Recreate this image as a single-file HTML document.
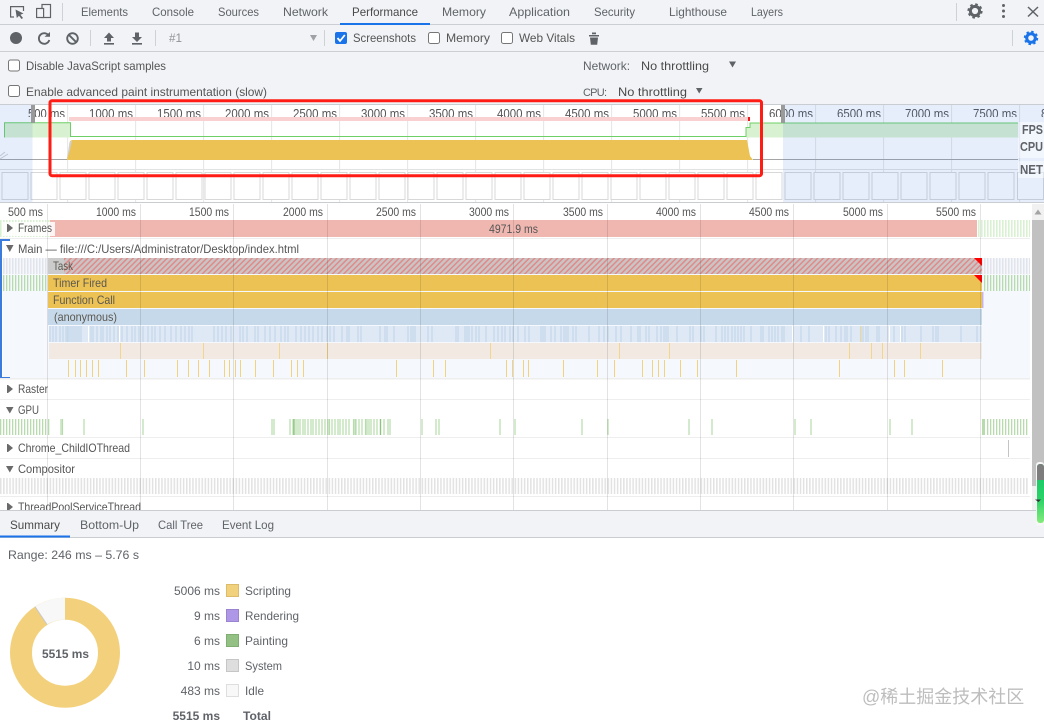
<!DOCTYPE html>
<html>
<head>
<meta charset="utf-8">
<title>Performance</title>
<style>
html,body{margin:0;padding:0;background:#fff;width:1044px;height:728px;overflow:hidden}
svg{display:block;position:absolute;left:0;top:0}
text{font-family:"Liberation Sans","Noto Sans CJK SC",sans-serif;font-size:12px;fill:#5f6368}
.d{fill:#4a4a4a}
.m{fill:#555}
.b{font-weight:bold}
.f{fill:#5c5850}
.o{font-size:12.5px;fill:#555}
.l{font-size:13px;font-weight:bold}
</style>
</head>
<body>
<svg width="1044" height="728" viewBox="0 0 1044 728" xmlns="http://www.w3.org/2000/svg">
<defs>
<pattern id="gp" width="3" height="20" patternUnits="userSpaceOnUse"><rect width="1.3" height="20" fill="#b7dbac"/></pattern>
<pattern id="gr" width="3" height="20" patternUnits="userSpaceOnUse"><rect width="1.6" height="20" fill="#d9f1d2"/></pattern>
<pattern id="gy" width="3" height="20" patternUnits="userSpaceOnUse"><rect width="1.5" height="20" fill="#e2e4ec"/></pattern>
<pattern id="cp" width="3.1" height="20" patternUnits="userSpaceOnUse"><rect width="1.5" height="20" fill="#e2e2e2"/></pattern>
<pattern id="ht" width="4" height="4" patternUnits="userSpaceOnUse" patternTransform="rotate(45)"><rect width="4" height="4" fill="#cbc4c4"/><rect width="1.5" height="4" fill="#e08a8a"/></pattern>
<pattern id="ss" x="1.5" y="172" width="29" height="30" patternUnits="userSpaceOnUse"><rect x=".5" y=".5" width="26" height="27" fill="#fff" stroke="#d8d8d8"/></pattern>
<linearGradient id="gg" x1="0" y1="0" x2="0" y2="1"><stop offset="0" stop-color="#13c468"/><stop offset=".6" stop-color="#2bd268"/><stop offset="1" stop-color="#85ea7c"/></linearGradient>
<clipPath id="ov"><rect x="0" y="104" width="1044" height="13"/></clipPath>
<clipPath id="main"><rect x="0" y="204" width="1044" height="306"/></clipPath>
</defs>

<!-- toolbars -->
<rect width="1044" height="104" fill="#f1f3f6"/>
<path d="M0 24.5H1044M0 51.5H1044" stroke="#cbced3"/>
<rect x="340" y="23" width="90" height="2" fill="#1a73e8"/>

<!-- tab icons -->
<g fill="none" stroke="#5f6368" stroke-width="1.2">
<path d="M14 17H10.6V6.6H23.5V11"/>
<rect x="42" y="4.5" width="8.5" height="13"/>
<rect x="36.6" y="8.5" width="7" height="9" fill="#f1f3f6"/>
</g>
<path d="M15.5 9.5L23.5 13.5L20.4 14.8L23 18L21.5 19L19 15.8L16.8 18Z" fill="#5f6368"/>
<path d="M62.5 3V21M956.5 3V21M90.5 30V46M155.5 30V46M324.5 30V46M1012.5 30V46" stroke="#ced1d5"/>

<!-- tabs -->
<text x="81" y="16" textLength="47" lengthAdjust="spacingAndGlyphs">Elements</text>
<text x="152" y="16" textLength="42" lengthAdjust="spacingAndGlyphs">Console</text>
<text x="218" y="16" textLength="41" lengthAdjust="spacingAndGlyphs">Sources</text>
<text x="283" y="16" textLength="45" lengthAdjust="spacingAndGlyphs">Network</text>
<text x="352" y="16" textLength="66" lengthAdjust="spacingAndGlyphs" class="d">Performance</text>
<text x="442" y="16" textLength="44" lengthAdjust="spacingAndGlyphs">Memory</text>
<text x="509" y="16" textLength="61" lengthAdjust="spacingAndGlyphs">Application</text>
<text x="594" y="16" textLength="41" lengthAdjust="spacingAndGlyphs">Security</text>
<text x="669" y="16" textLength="58" lengthAdjust="spacingAndGlyphs">Lighthouse</text>
<text x="751" y="16" textLength="32" lengthAdjust="spacingAndGlyphs">Layers</text>

<!-- top right icons -->
<g transform="translate(975 11)" fill="none" stroke="#5f6368">
<circle r="4.6" stroke-width="3"/>
<circle r="6.6" stroke-width="2" stroke-dasharray="2.6 2.58"/>
</g>
<g fill="#5f6368"><circle cx="1003.5" cy="5.5" r="1.5"/><circle cx="1003.5" cy="11" r="1.5"/><circle cx="1003.5" cy="16.5" r="1.5"/></g>
<path d="M1028 7L1038 16.5M1038 7L1028 16.5" stroke="#5f6368" stroke-width="1.5"/>

<!-- toolbar 2 icons -->
<circle cx="16" cy="38" r="6" fill="#5f6368"/>
<path d="M49 36.2A5.3 5.3 0 1 0 49.3 40" fill="none" stroke="#5f6368" stroke-width="1.9"/>
<path d="M44.5 36.8H50V32Z" fill="#5f6368"/>
<circle cx="72.5" cy="38.5" r="5.3" fill="none" stroke="#5f6368" stroke-width="1.9"/>
<path d="M68.8 34.8L76.2 42.2" stroke="#5f6368" stroke-width="1.9"/>
<path d="M109 32.5L114 38H111V41.5H107V38H104ZM104 43H114V44.6H104Z" fill="#5f6368"/>
<path d="M135 32.5H139V37H142L137 42L132 37H135ZM132 43H142V44.6H132Z" fill="#5f6368"/>
<text x="169" y="42" textLength="13" lengthAdjust="spacingAndGlyphs" style="fill:#8f9296">#1</text>
<path d="M310 35H317L313.5 41Z" fill="#9ea1a5"/>

<!-- checkboxes -->
<rect x="335" y="32" width="12" height="12" rx="2" fill="#1a73e8"/>
<path d="M337.5 38L340 41L344.8 35" fill="none" stroke="#fff" stroke-width="1.8"/>
<text x="353" y="42" textLength="63" lengthAdjust="spacingAndGlyphs" class="m">Screenshots</text>
<g fill="#fff" stroke="#767676">
<rect x="428.5" y="32.5" width="11" height="11" rx="2"/>
<rect x="501.5" y="32.5" width="11" height="11" rx="2"/>
<rect x="8.5" y="60" width="11" height="11" rx="2"/>
<rect x="8.5" y="85.5" width="11" height="11" rx="2"/>
</g>
<text x="446" y="42" textLength="44" lengthAdjust="spacingAndGlyphs" class="m">Memory</text>
<text x="519" y="42" textLength="56" lengthAdjust="spacingAndGlyphs" class="m">Web Vitals</text>
<path d="M589 35H599V36.5H589ZM592 32.5H596V34.2H592ZM590 37.5H598L597.2 44.8H590.8Z" fill="#5f6368"/>
<g transform="translate(1031 38)" fill="none" stroke="#1a73e8">
<circle r="4.3" stroke-width="3"/>
<circle r="6.2" stroke-width="2" stroke-dasharray="2.45 2.42"/>
</g>

<text x="26" y="70" textLength="140" lengthAdjust="spacingAndGlyphs" class="m">Disable JavaScript samples</text>
<text x="26" y="96" textLength="241" lengthAdjust="spacingAndGlyphs" class="m">Enable advanced paint instrumentation (slow)</text>
<text x="583" y="70" textLength="47" lengthAdjust="spacingAndGlyphs">Network:</text>
<text x="641" y="70" textLength="68" lengthAdjust="spacingAndGlyphs" class="d">No throttling</text>
<path d="M729 61.5H736L732.5 67.5Z" fill="#5f6368"/>
<text x="583" y="96" textLength="24" lengthAdjust="spacing" style="font-size:11px">CPU:</text>
<text x="618" y="96" textLength="69" lengthAdjust="spacingAndGlyphs" class="d">No throttling</text>
<path d="M696 88H702.5L699.2 93.5Z" fill="#5f6368"/>

<!-- overview -->
<rect x="0" y="104" width="1044" height="98" fill="#fff"/>
<path d="M0 104.5H1044M0 202.5H1044" stroke="#c9ccd0"/>
<path d="M67.6 105V202M135.6 105V202M203.6 105V202M271.6 105V202M339.6 105V202M407.6 105V202M475.6 105V202M543.6 105V202M611.6 105V202M679.6 105V202M747.6 105V202M815.6 105V202M883.6 105V202M951.6 105V202M1019.6 105V202" stroke="#e6e6e6"/>
<g clip-path="url(#ov)">
<text x="28" y="118" textLength="37" lengthAdjust="spacingAndGlyphs" class="o">500 ms</text>
<text x="89" y="118" textLength="44" lengthAdjust="spacingAndGlyphs" class="o">1000 ms</text>
<text x="157" y="118" textLength="44" lengthAdjust="spacingAndGlyphs" class="o">1500 ms</text>
<text x="225" y="118" textLength="44" lengthAdjust="spacingAndGlyphs" class="o">2000 ms</text>
<text x="293" y="118" textLength="44" lengthAdjust="spacingAndGlyphs" class="o">2500 ms</text>
<text x="361" y="118" textLength="44" lengthAdjust="spacingAndGlyphs" class="o">3000 ms</text>
<text x="429" y="118" textLength="44" lengthAdjust="spacingAndGlyphs" class="o">3500 ms</text>
<text x="497" y="118" textLength="44" lengthAdjust="spacingAndGlyphs" class="o">4000 ms</text>
<text x="565" y="118" textLength="44" lengthAdjust="spacingAndGlyphs" class="o">4500 ms</text>
<text x="633" y="118" textLength="44" lengthAdjust="spacingAndGlyphs" class="o">5000 ms</text>
<text x="701" y="118" textLength="44" lengthAdjust="spacingAndGlyphs" class="o">5500 ms</text>
<text x="769" y="118" textLength="44" lengthAdjust="spacingAndGlyphs" class="o">6000 ms</text>
<text x="837" y="118" textLength="44" lengthAdjust="spacingAndGlyphs" class="o">6500 ms</text>
<text x="905" y="118" textLength="44" lengthAdjust="spacingAndGlyphs" class="o">7000 ms</text>
<text x="973" y="118" textLength="44" lengthAdjust="spacingAndGlyphs" class="o">7500 ms</text>
<text x="1041" y="118" textLength="44" lengthAdjust="spacingAndGlyphs" class="o">8000 ms</text>
</g>
<!-- FPS -->
<rect x="69" y="117" width="679" height="4" fill="#f9d1d1"/>
<rect x="748" y="117" width="2" height="4" fill="#f01818"/>
<path d="M4.5 137.5V122.7H70.5V137.5Z" fill="#d8f1d0"/>
<path d="M746 137.5V127.5H750V123H1018V137.5Z" fill="#d8f1d0"/>
<path d="M4.5 137.5V122.7H70.5V136.5H746V127.5H750V123H1018" fill="none" stroke="#6dd066"/>
<!-- CPU -->
<path d="M67 160L70 141L72 140H747L750 156L753 160Z" fill="#ecc254"/>
<path d="M67 159L69.5 142L72 140.5L70 150Z" fill="#cfcfcf"/>
<path d="M0 159.5H67M753 159.5H1018" stroke="#a5a5a5"/>
<path d="M0 156L5 152M0 159L8 154" stroke="#d0d0d0"/>
<path d="M0 169.5H1018" stroke="#e2e2e2"/>
<!-- screenshots -->
<rect x="1.5" y="172" width="1014" height="28" fill="url(#ss)"/>
<rect x="1017.5" y="172.5" width="26" height="27" fill="#fff" stroke="#d8d8d8"/>
<!-- overlay -->
<rect x="0" y="105" width="32.5" height="97" fill="#4278dc" fill-opacity=".125"/>
<rect x="783" y="105" width="261" height="97" fill="#4278dc" fill-opacity=".125"/>
<rect x="31" y="105" width="4" height="18" fill="#9a9a9a"/>
<rect x="781" y="105" width="4" height="18" fill="#9a9a9a"/>
<!-- labels -->
<rect x="1019" y="122" width="25" height="16" fill="#fff" fill-opacity=".45"/>
<rect x="1018" y="138" width="26" height="20" fill="#fff" fill-opacity=".45"/>
<rect x="1018" y="161" width="26" height="17" fill="#fff" fill-opacity=".45"/>
<text x="1022" y="134" textLength="21" lengthAdjust="spacingAndGlyphs" class="l">FPS</text>
<text x="1020" y="151" textLength="23" lengthAdjust="spacingAndGlyphs" class="l">CPU</text>
<text x="1020" y="174" textLength="23" lengthAdjust="spacingAndGlyphs" class="l">NET</text>

<!-- main area -->
<g clip-path="url(#main)">
<rect x="0" y="203" width="1044" height="307" fill="#fff"/>
<!-- frames -->
<rect x="0" y="220" width="50" height="17" fill="url(#gr)"/>
<rect x="50" y="220" width="927" height="17" fill="#f0b7b1"/>
<rect x="978" y="220" width="52" height="17" fill="url(#gr)"/>
<rect x="3" y="222" width="52" height="14" fill="#fff" fill-opacity=".85"/>
<rect x="0" y="238" width="1030" height="1" fill="#eeeeee"/>
<path d="M7 224H8L13 228L8 232H7Z" fill="#6a6a6a"/>
<text x="18" y="232" textLength="34" lengthAdjust="spacingAndGlyphs" class="m">Frames</text>
<text x="489" y="233" textLength="49" lengthAdjust="spacingAndGlyphs" class="m">4971.9 ms</text>

<!-- Main group -->
<rect x="3" y="258" width="1027" height="120" fill="#f5f8fd"/>
<path d="M10 240H1V378H10" fill="none" stroke="#3a7bdc" stroke-width="2"/>
<path d="M6 245H13.5L9.8 252Z" fill="#6a6a6a"/>
<text x="18" y="253" textLength="281" lengthAdjust="spacingAndGlyphs" class="m">Main — file:///C:/Users/Administrator/Desktop/index.html</text>

<rect x="3" y="258" width="45" height="16" fill="url(#gy)"/>
<rect x="982" y="258" width="48" height="16" fill="url(#gy)"/>
<rect x="3" y="275" width="45" height="16" fill="url(#gp)"/>
<rect x="983" y="275" width="47" height="16" fill="url(#gp)"/>

<rect x="48" y="258" width="934" height="16" fill="url(#ht)"/>
<rect x="48" y="258" width="16" height="16" fill="#cbcbcb"/>
<rect x="48" y="275" width="934" height="16" fill="#ecc254"/>
<rect x="48" y="292" width="934" height="16" fill="#ecc254"/>
<rect x="982" y="292" width="1.5" height="16" fill="#c7b4e6"/>
<rect x="48" y="309" width="934" height="16" fill="#c5d9ea"/>
<path d="M974 258H982V266Z" fill="#f00"/>
<path d="M974 275H982V283Z" fill="#f00"/>
<text x="53" y="270" textLength="20" lengthAdjust="spacingAndGlyphs" class="f">Task</text>
<text x="53" y="287" textLength="54" lengthAdjust="spacingAndGlyphs" class="f">Timer Fired</text>
<text x="53" y="304" textLength="62" lengthAdjust="spacingAndGlyphs" class="f">Function Call</text>
<text x="54" y="321" textLength="63" lengthAdjust="spacingAndGlyphs" class="f">(anonymous)</text>

<!-- blue stripes row -->
<rect x="49" y="326" width="933" height="16" fill="#dfe9f5"/>
<path stroke="#c5d9ea" stroke-width="1.3" d="M50 326v16M53 326v16M56 326v16M60 326v16M63 326v16M66 326v16M67.500 326v16M69 326v16M71 326v16M73 326v16M75 326v16M77 326v16M79 326v16M81 326v16M91 326v16M93 326v16M97 326v16M101 326v16M103 326v16M107 326v16M110 326v16M114 326v16M118 326v16M122 326v16M127 326v16M132 326v16M135 326v16M139 326v16M143 326v16M148 326v16M152 326v16M155 326v16M160 326v16M165 326v16M171 326v16M176 326v16M181 326v16M185 326v16M189 326v16M192 326v16M214 326v16M218 326v16M222 326v16M226 326v16M231 326v16M240 326v16M243 326v16M247 326v16M255 326v16M258 326v16M265 326v16M270 326v16M275 326v16M281 326v16M285 326v16M288 326v16M296 326v16M301 326v16M305 326v16M309 326v16M313 326v16M318 326v16M322 326v16M327 326v16M330 326v16M334 326v16M342 326v16M347 326v16M349 326v16M358 326v16M361 326v16M380 326v16M385 326v16M387 326v16M394 326v16M408 326v16M411 326v16M413 326v16M415 326v16M428 326v16M432 326v16M456 326v16M458 326v16M465 326v16M467 326v16M469 326v16M472 326v16M476 326v16M479 326v16M486 326v16M494 326v16M498 326v16M502 326v16M505 326v16M510 326v16M513 326v16M518 326v16M525 326v16M529 326v16M541 326v16M543 326v16M545 326v16M551 326v16M555 326v16M561 326v16M564 326v16M566 326v16M568 326v16M573 326v16M576 326v16M589 326v16M599 326v16M604 326v16M608 326v16M616 326v16M621 326v16M631 326v16M638 326v16M640 326v16M646 326v16M649 326v16M657 326v16M661 326v16M664 326v16M666 326v16M668 326v16M677 326v16M690 326v16M693 326v16M701 326v16M704 326v16M716 326v16M722 326v16M725 326v16M728 326v16M732 326v16M735 326v16M738 326v16M741 326v16M744 326v16M751 326v16M761 326v16M763 326v16M769 326v16M772 326v16M775 326v16M778 326v16M782 326v16M784 326v16M801 326v16M809 326v16M826 326v16M829 326v16M836 326v16M841 326v16M845 326v16M847 326v16M851 326v16M861 326v16M863 326v16M866 326v16M868 326v16M877 326v16M879 326v16M894 326v16M902 326v16M905 326v16M921 326v16M933 326v16M936 326v16M938 326v16M961 326v16M977 326v16"/>
<path stroke="#fff" stroke-width="1" d="M88.500 326v16M119.500 326v16M792.500 326v16M823.500 326v16M889.500 326v16M900.500 326v16"/>
<!-- beige row -->
<rect x="49" y="343" width="933" height="16" fill="#f2e9e3"/>
<path stroke="#f1d78e" stroke-width="1" d="M120.500 343v16M203.500 343v16M279.500 343v16M327.500 343v16M490.500 343v16M619.500 343v16M669.500 343v16M849.500 343v16M871.500 343v16M882.500 343v16M920.500 343v16"/>
<path stroke="#f1d78e" stroke-width="1" d="M860.500 326v16"/>
<!-- yellow ticks -->
<path stroke="#f2d27e" stroke-width="1" d="M68.500 360v17M75.500 360v17M80.500 360v17M86.500 360v17M92.500 360v17M98.500 360v17M126.500 360v17M144.500 360v17M177.500 360v17M188.500 360v17M198.500 360v17M209.500 360v17M224.500 360v17M229.500 360v17M235.500 360v17M240.500 360v17M255.500 360v17M273.500 360v17M291.500 360v17M297.500 360v17M303.500 360v17M396.500 360v17M433.500 360v17M445.500 360v17M506.500 360v17M512.500 360v17M523.500 360v17M528.500 360v17M563.500 360v17M597.500 360v17M614.500 360v17M642.500 360v17M652.500 360v17M658.500 360v17M664.500 360v17M680.500 360v17M697.500 360v17M736.500 360v17M839.500 360v17M894.500 360v17M904.500 360v17M942.500 360v17"/>
<rect x="0" y="378" width="1030" height="1.500" fill="#eeeeee"/>

<!-- Raster -->
<path d="M7 385H8L13 389L8 393H7Z" fill="#6a6a6a"/>
<text x="18" y="393" textLength="30" lengthAdjust="spacingAndGlyphs" class="m">Raster</text>
<rect x="0" y="399" width="1030" height="1" fill="#eeeeee"/>
<!-- GPU -->
<path d="M6 407H13.5L9.800 413.500Z" fill="#6a6a6a"/>
<text x="18" y="414" textLength="21" lengthAdjust="spacingAndGlyphs" class="m">GPU</text>
<rect x="0" y="419" width="51" height="16" fill="url(#gp)"/>
<path stroke="#b7dbac" stroke-width="1.2" d="M61 419v16M62.500 419v16M84 419v16M143 419v16M272 419v16M274 419v16M290 419v16M293 419v16M296 419v16M298 419v16M300 419v16M303 419v16M305 419v16M308 419v16M311 419v16M313 419v16M316 419v16M319 419v16M322 419v16M325 419v16M328 419v16M329.500 419v16M332 419v16M335 419v16M338 419v16M340 419v16M343 419v16M346 419v16M349 419v16M353.500 419v16M355 419v16M356 419v16M359 419v16M362 419v16M365.500 419v16M367 419v16M369 419v16M371 419v16M374 419v16M377 419v16M384 419v16M388 419v16M390 419v16M422 419v16M436 419v16M439 419v16M500 419v16M515 419v16M582 419v16M608 419v16M689 419v16M712 419v16M795 419v16M811 419v16M890 419v16M912 419v16"/>
<path stroke="#8cc47e" stroke-width="1.4" d="M294 419v16M380.500 419v16"/>
<rect x="982" y="419" width="3" height="16" fill="#b7dbac"/>
<rect x="987" y="419" width="42" height="16" fill="url(#gp)"/>
<rect x="0" y="437" width="1030" height="1" fill="#eeeeee"/>
<!-- Chrome_ChildIOThread -->
<path d="M7 444H8L13 448L8 452H7Z" fill="#6a6a6a"/>
<text x="18" y="452" textLength="112" lengthAdjust="spacingAndGlyphs" class="m">Chrome_ChildIOThread</text>
<rect x="1008" y="440" width="1" height="17" fill="#c4c4c4"/>
<rect x="0" y="458" width="1030" height="1" fill="#eeeeee"/>
<!-- Compositor -->
<path d="M6 466H13.500L9.800 472.500Z" fill="#6a6a6a"/>
<text x="18" y="473" textLength="57" lengthAdjust="spacingAndGlyphs" class="m">Compositor</text>
<rect x="0" y="478" width="1029" height="16" fill="url(#cp)"/>
<rect x="0" y="496" width="1030" height="1" fill="#eeeeee"/>
<!-- ThreadPool -->
<path d="M7 503H8L13 507L8 511H7Z" fill="#6a6a6a"/>
<text x="18" y="511" textLength="123" lengthAdjust="spacingAndGlyphs" class="m">ThreadPoolServiceThread</text>

<!-- grid lines -->
<path stroke="#000" stroke-opacity=".11" d="M47.500 204V510M140.500 204V510M233.500 204V510M327.500 204V510M420.500 204V510M513.500 204V510M607.500 204V510M700.500 204V510M793.500 204V510M887.500 204V510M980.500 204V510"/>
<!-- ruler labels -->
<text x="8" y="216" textLength="35" lengthAdjust="spacingAndGlyphs" class="m">500 ms</text>
<text x="96" y="216" textLength="40" lengthAdjust="spacingAndGlyphs" class="m">1000 ms</text>
<text x="189" y="216" textLength="40" lengthAdjust="spacingAndGlyphs" class="m">1500 ms</text>
<text x="283" y="216" textLength="40" lengthAdjust="spacingAndGlyphs" class="m">2000 ms</text>
<text x="376" y="216" textLength="40" lengthAdjust="spacingAndGlyphs" class="m">2500 ms</text>
<text x="469" y="216" textLength="40" lengthAdjust="spacingAndGlyphs" class="m">3000 ms</text>
<text x="563" y="216" textLength="40" lengthAdjust="spacingAndGlyphs" class="m">3500 ms</text>
<text x="656" y="216" textLength="40" lengthAdjust="spacingAndGlyphs" class="m">4000 ms</text>
<text x="749" y="216" textLength="40" lengthAdjust="spacingAndGlyphs" class="m">4500 ms</text>
<text x="843" y="216" textLength="40" lengthAdjust="spacingAndGlyphs" class="m">5000 ms</text>
<text x="936" y="216" textLength="40" lengthAdjust="spacingAndGlyphs" class="m">5500 ms</text>
</g>

<!-- scrollbar -->
<rect x="1032" y="204" width="12" height="306" fill="#f1f1f1"/>
<path d="M1034.500 214.500H1041.500L1038 209.500Z" fill="#a3a3a3"/>
<rect x="1032" y="220" width="12" height="266" fill="#c1c1c1"/>

<!-- bottom panel -->
<rect x="0" y="511" width="1044" height="26" fill="#f1f3f6"/>
<path d="M0 510.500H1044M0 537.500H1044" stroke="#c9ccd0"/>
<rect x="0" y="535.500" width="70" height="2" fill="#1a73e8"/>
<text x="10" y="529" textLength="50" lengthAdjust="spacingAndGlyphs" class="d">Summary</text>
<text x="80" y="529" textLength="59" lengthAdjust="spacingAndGlyphs">Bottom-Up</text>
<text x="158" y="529" textLength="45" lengthAdjust="spacingAndGlyphs">Call Tree</text>
<text x="222" y="529" textLength="52" lengthAdjust="spacingAndGlyphs">Event Log</text>

<!-- green scroll overlay -->
<rect x="1036" y="462" width="8" height="64" rx="3" fill="#f7f7f7"/>
<rect x="1037" y="464" width="7" height="59" rx="3" fill="url(#gg)"/>
<path d="M1037 480V467A3 3 0 0 1 1040 464H1041A3 3 0 0 1 1044 467V480Z" fill="#7d7d7d"/>
<path d="M1035 499.500H1041L1038.500 502Z" fill="#333"/>

<text x="8" y="559" textLength="131" lengthAdjust="spacingAndGlyphs">Range: 246 ms – 5.76 s</text>

<!-- donut -->
<circle cx="65" cy="652.700" r="44" fill="none" stroke="#f3d17c" stroke-width="22"/>
<path d="M65 597.700A55 55 0 0 0 35 606.600L47 624.500A33 33 0 0 1 65 619.700Z" fill="#f8f8f8"/>
<path d="M35 606.600L47 624.500" stroke="#c8c8c8" stroke-width="1"/>
<text x="42" y="658" textLength="47" lengthAdjust="spacingAndGlyphs" class="b">5515 ms</text>

<!-- legend -->
<g text-anchor="end">
<text x="220" y="595">5006 ms</text>
<text x="220" y="620">9 ms</text>
<text x="220" y="645">6 ms</text>
<text x="220" y="670">10 ms</text>
<text x="220" y="695">483 ms</text>
<text x="220" y="720" class="b">5515 ms</text>
</g>
<rect x="226.500" y="584.500" width="12" height="12" fill="#f2d17c" stroke="#dcbc6a"/>
<rect x="226.500" y="609.500" width="12" height="12" fill="#af97e8" stroke="#9a84cf"/>
<rect x="226.500" y="634.500" width="12" height="12" fill="#92c183" stroke="#80ae72"/>
<rect x="226.500" y="659.500" width="12" height="12" fill="#dedede" stroke="#c6c6c6"/>
<rect x="226.500" y="684.500" width="12" height="12" fill="#f8f8f8" stroke="#dedede"/>
<text x="245" y="595" textLength="46" lengthAdjust="spacingAndGlyphs">Scripting</text>
<text x="245" y="620" textLength="54" lengthAdjust="spacingAndGlyphs">Rendering</text>
<text x="245" y="645" textLength="43" lengthAdjust="spacingAndGlyphs">Painting</text>
<text x="245" y="670" textLength="37" lengthAdjust="spacingAndGlyphs">System</text>
<text x="245" y="695" textLength="19" lengthAdjust="spacingAndGlyphs">Idle</text>
<text x="243" y="720" textLength="28" lengthAdjust="spacingAndGlyphs" class="b">Total</text>

<!-- watermark -->
<text x="862" y="703" style="font-size:18px;fill:#bdbdbd">@稀土掘金技术社区</text>

<!-- red annotation -->
<rect x="50" y="100.700" width="711.500" height="75" rx="2" fill="none" stroke="#ff1c14" stroke-width="3"/>
</svg>
</body>
</html>
